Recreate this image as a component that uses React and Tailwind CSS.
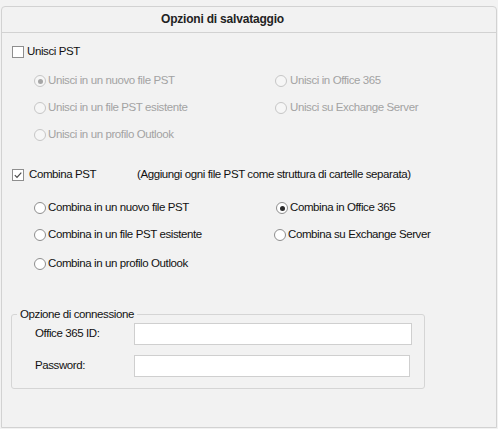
import React from "react";

function Radio({ checked, disabled }) {
  return (
    <span
      className={
        disabled
          ? "flex h-[12px] w-[12px] shrink-0 items-center justify-center rounded-full border border-[#c6c6c6] bg-[#f6f6f6]"
          : "flex h-[12px] w-[12px] shrink-0 items-center justify-center rounded-full border border-[#8e8e8e] bg-white"
      }
    >
      {checked ? (
        <span
          className={
            disabled
              ? "h-[5px] w-[5px] rounded-full bg-[#a6a6a6]"
              : "h-[5px] w-[5px] rounded-full bg-[#2b2b2b]"
          }
        />
      ) : null}
    </span>
  );
}

function Checkbox({ checked }) {
  return (
    <span className="flex h-[12px] w-[12px] shrink-0 items-center justify-center border border-[#8e8e8e] bg-white">
      {checked ? (
        <svg width="10" height="10" viewBox="0 0 10 10">
          <polyline
            points="1.8,5.2 4,7.4 8.3,2.6"
            fill="none"
            stroke="#4a4a4a"
            strokeWidth="1.2"
          />
        </svg>
      ) : null}
    </span>
  );
}

function Option({ checked, disabled, label, width, gap }) {
  return (
    <div className={"flex items-center " + (width || "")}>
      <Radio checked={checked} disabled={disabled} />
      <span className={(gap || "ml-[2px]") + (disabled ? " text-[#a3a3a3]" : "")}>{label}</span>
    </div>
  );
}

export default function App() {
  return (
    <div className="min-h-[429px] w-[498px] bg-[#f2f2f2] pl-[1px] pt-[6px] font-['Liberation_Sans',Arial,sans-serif] text-[11.5px] tracking-[-0.4px] text-[#111]">
      <div className="flex h-[422px] w-[496px] flex-col rounded-t-[4px] border border-[#d2d2d2]">
        <div className="flex h-[26px] items-center border-b border-[#d2d2d2] pb-[2px] pl-[159px] text-[12px] font-bold tracking-[-0.2px] text-[#222]">
          Opzioni di salvataggio
        </div>

        <div className="mt-[9px] flex h-[20px] items-center pl-[10px]">
          <Checkbox />
          <span className="ml-[3px]">Unisci PST</span>
        </div>

        <div className="mt-[9px] flex h-[20px] items-center pl-[32px]">
          <Option checked disabled label="Unisci in un nuovo file PST" width="w-[241px]" />
          <Option disabled label="Unisci in Office 365" gap="ml-[3px]" />
        </div>
        <div className="mt-[7px] flex h-[20px] items-center pl-[32px]">
          <Option disabled label="Unisci in un file PST esistente" width="w-[241px]" />
          <Option disabled label="Unisci su Exchange Server" gap="ml-[3px]" />
        </div>
        <div className="mt-[7px] flex h-[20px] items-center pl-[32px]">
          <Option disabled label="Unisci in un profilo Outlook" width="w-[241px]" />
        </div>

        <div className="mt-[20px] flex h-[20px] items-center pl-[10px]">
          <Checkbox checked />
          <span className="ml-[5px] w-[108px]">Combina PST</span>
          <span>(Aggiungi ogni file PST come struttura di cartelle separata)</span>
        </div>

        <div className="mt-[13px] flex h-[20px] items-center pl-[32px]">
          <Option label="Combina in un nuovo file PST" width="w-[242px]" />
          <Option checked label="Combina in Office 365" gap="ml-[2px]" />
        </div>
        <div className="mt-[7px] flex h-[20px] items-center pl-[32px]">
          <Option label="Combina in un file PST esistente" width="w-[240px]" />
          <Option label="Combina su Exchange Server" gap="ml-[2px]" />
        </div>
        <div className="mt-[9px] flex h-[20px] items-center pl-[32px]">
          <Option label="Combina in un profilo Outlook" width="w-[241px]" />
        </div>

        <fieldset className="ml-[9px] mt-[33px] w-[414px] rounded-[3px] border border-[#d5d5d5] pb-[11px]">
          <legend className="ml-[5px] px-[3px] leading-[14px]">Opzione di connessione</legend>
          <div className="mt-[2px] flex h-[22px] items-center">
            <span className="ml-[23px] w-[99px]">Office 365 ID:</span>
            <input
              type="text"
              readOnly
              className="h-[22px] w-[278px] border border-[#cfcfcf] bg-white outline-none"
            />
          </div>
          <div className="mt-[10px] flex h-[22px] items-center">
            <span className="ml-[23px] w-[99px]">Password:</span>
            <input
              type="password"
              readOnly
              className="h-[22px] w-[276px] border border-[#cfcfcf] bg-white outline-none"
            />
          </div>
        </fieldset>
      </div>
    </div>
  );
}
